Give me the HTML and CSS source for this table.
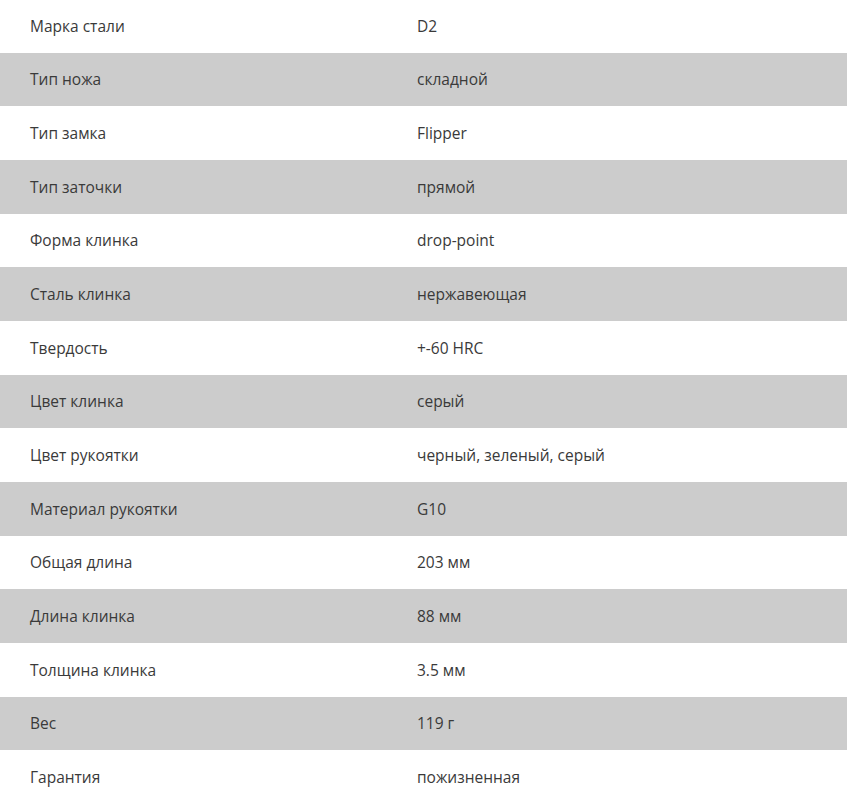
FILE: index.html
```html
<!DOCTYPE html>
<html lang="ru">
<head>
<meta charset="utf-8">
<link rel="stylesheet" href="styles.css">
</head>
<body>
<div class="specs">
  <div class="row"><div class="name">Марка стали</div><div class="value">D2</div></div>
  <div class="row"><div class="name">Тип ножа</div><div class="value">складной</div></div>
  <div class="row"><div class="name">Тип замка</div><div class="value">Flipper</div></div>
  <div class="row"><div class="name">Тип заточки</div><div class="value">прямой</div></div>
  <div class="row"><div class="name">Форма клинка</div><div class="value">drop-point</div></div>
  <div class="row"><div class="name">Сталь клинка</div><div class="value">нержавеющая</div></div>
  <div class="row"><div class="name">Твердость</div><div class="value">+-60 HRC</div></div>
  <div class="row"><div class="name">Цвет клинка</div><div class="value">серый</div></div>
  <div class="row"><div class="name">Цвет рукоятки</div><div class="value">черный, зеленый, серый</div></div>
  <div class="row"><div class="name">Материал рукоятки</div><div class="value">G10</div></div>
  <div class="row"><div class="name">Общая длина</div><div class="value">203 мм</div></div>
  <div class="row"><div class="name">Длина клинка</div><div class="value">88 мм</div></div>
  <div class="row"><div class="name">Толщина клинка</div><div class="value">3.5 мм</div></div>
  <div class="row"><div class="name">Вес</div><div class="value">119 г</div></div>
  <div class="row"><div class="name">Гарантия</div><div class="value">пожизненная</div></div>
</div>
</body>
</html>
```
FILE: styles.css
```css
html, body {
  margin: 0;
  padding: 0;
  background: #fff;
}
body {
  font-family: "Open Sans", "Liberation Sans", sans-serif;
  font-size: 15.5px;
  color: #3a3a3a;
  overflow: hidden;
}
.specs {
  margin-top: -1px;
}
.row {
  display: grid;
  grid-template-columns: 387px 1fr;
  align-items: center;
  height: 53.67px;
  padding-left: 30px;
  box-sizing: border-box;
}
.row:nth-child(even) {
  background: #cccccc;
}
```
